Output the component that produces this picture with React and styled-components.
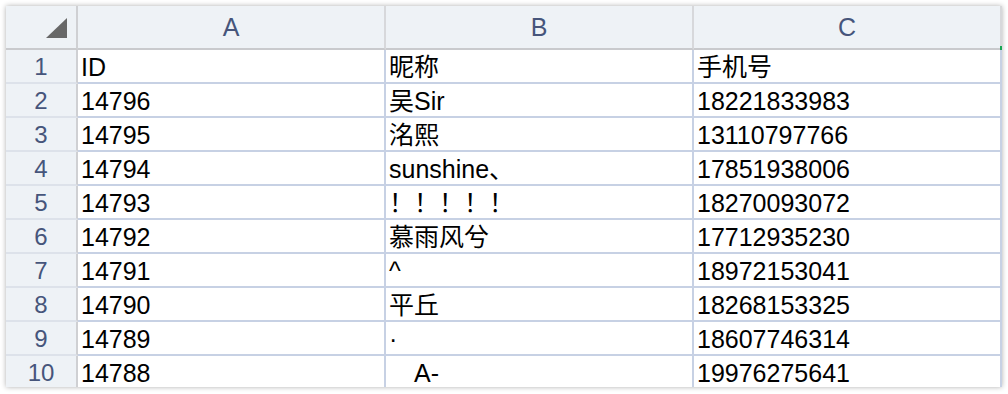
import React from 'react';
import styled, { createGlobalStyle } from 'styled-components';

const GlobalStyle = createGlobalStyle`
  html, body {
    margin: 0;
    padding: 0;
    background: #ffffff;
  }
`;

const rows = [
  ['ID', '昵称', '手机号'],
  ['14796', '吴Sir', '18221833983'],
  ['14795', '洺熙', '13110797766'],
  ['14794', 'sunshine、', '17851938006'],
  ['14793', '！！！！！', '18270093072'],
  ['14792', '慕雨风兮', '17712935230'],
  ['14791', '^', '18972153041'],
  ['14790', '平丘', '18268153325'],
  ['14789', '·', '18607746314'],
  ['14788', '\u3000A-', '19976275641'],
];

const columns = ['A', 'B', 'C'];

const Sheet = styled.div`
  position: relative;
  margin: 6px;
  width: 996px;
  height: 381px;
  overflow: hidden;
  display: grid;
  grid-template-columns: 72px repeat(3, 308px);
  grid-template-rows: 44px;
  grid-auto-rows: 34px;
  box-shadow: 0 0 5px rgba(0, 0, 0, 0.32);
  font-family: 'Liberation Sans', Arial, 'Noto Sans CJK SC', sans-serif;
`;

const HeadCell = styled.div`
  box-sizing: border-box;
  display: flex;
  align-items: center;
  justify-content: center;
  background: #eef2f6;
  border-right: 2px solid ${({ $corner }) => ($corner ? '#cfd0d3' : '#d7d8db')};
  border-bottom: 2px solid #c9cacd;
  color: #46557b;
  font-size: 25px;
  line-height: 42px;
`;

const Corner = styled(HeadCell)`
  justify-content: flex-end;
  align-items: flex-end;
  padding: 0 9px 10px 0;

  svg {
    display: block;
  }
`;

const RowNum = styled.div`
  box-sizing: border-box;
  display: flex;
  align-items: center;
  justify-content: center;
  padding-top: 1px;
  background: #eef2f6;
  border-right: 2px solid #cfd0d3;
  border-bottom: 2px solid #dde2ea;
  color: #46557b;
  font-size: 24px;
  line-height: 32px;
`;

const Cell = styled.div`
  box-sizing: border-box;
  display: flex;
  align-items: center;
  padding: 1px 0 0 3px;
  background: #ffffff;
  border-right: 2px solid #c7d1e4;
  border-bottom: 2px solid #c7d1e4;
  color: #000000;
  font-size: 25px;
  line-height: 32px;
  white-space: pre;
  overflow: hidden;
`;

const FillHandle = styled.span`
  position: absolute;
  top: 40px;
  right: 0;
  width: 2px;
  height: 4px;
  background: #17a553;
`;

const App = () => (
  <>
    <GlobalStyle />
    <Sheet>
      <Corner $corner>
        <svg width="21" height="20" viewBox="0 0 21 20">
          <polygon points="21,0 21,20 0,20" fill="#686868" />
        </svg>
      </Corner>
      {columns.map((c) => (
        <HeadCell key={c}>{c}</HeadCell>
      ))}
      {rows.map((row, i) => (
        <React.Fragment key={i}>
          <RowNum>{i + 1}</RowNum>
          {row.map((value, j) => (
            <Cell key={j}>{value}</Cell>
          ))}
        </React.Fragment>
      ))}
      <FillHandle />
    </Sheet>
  </>
);

export default App;
